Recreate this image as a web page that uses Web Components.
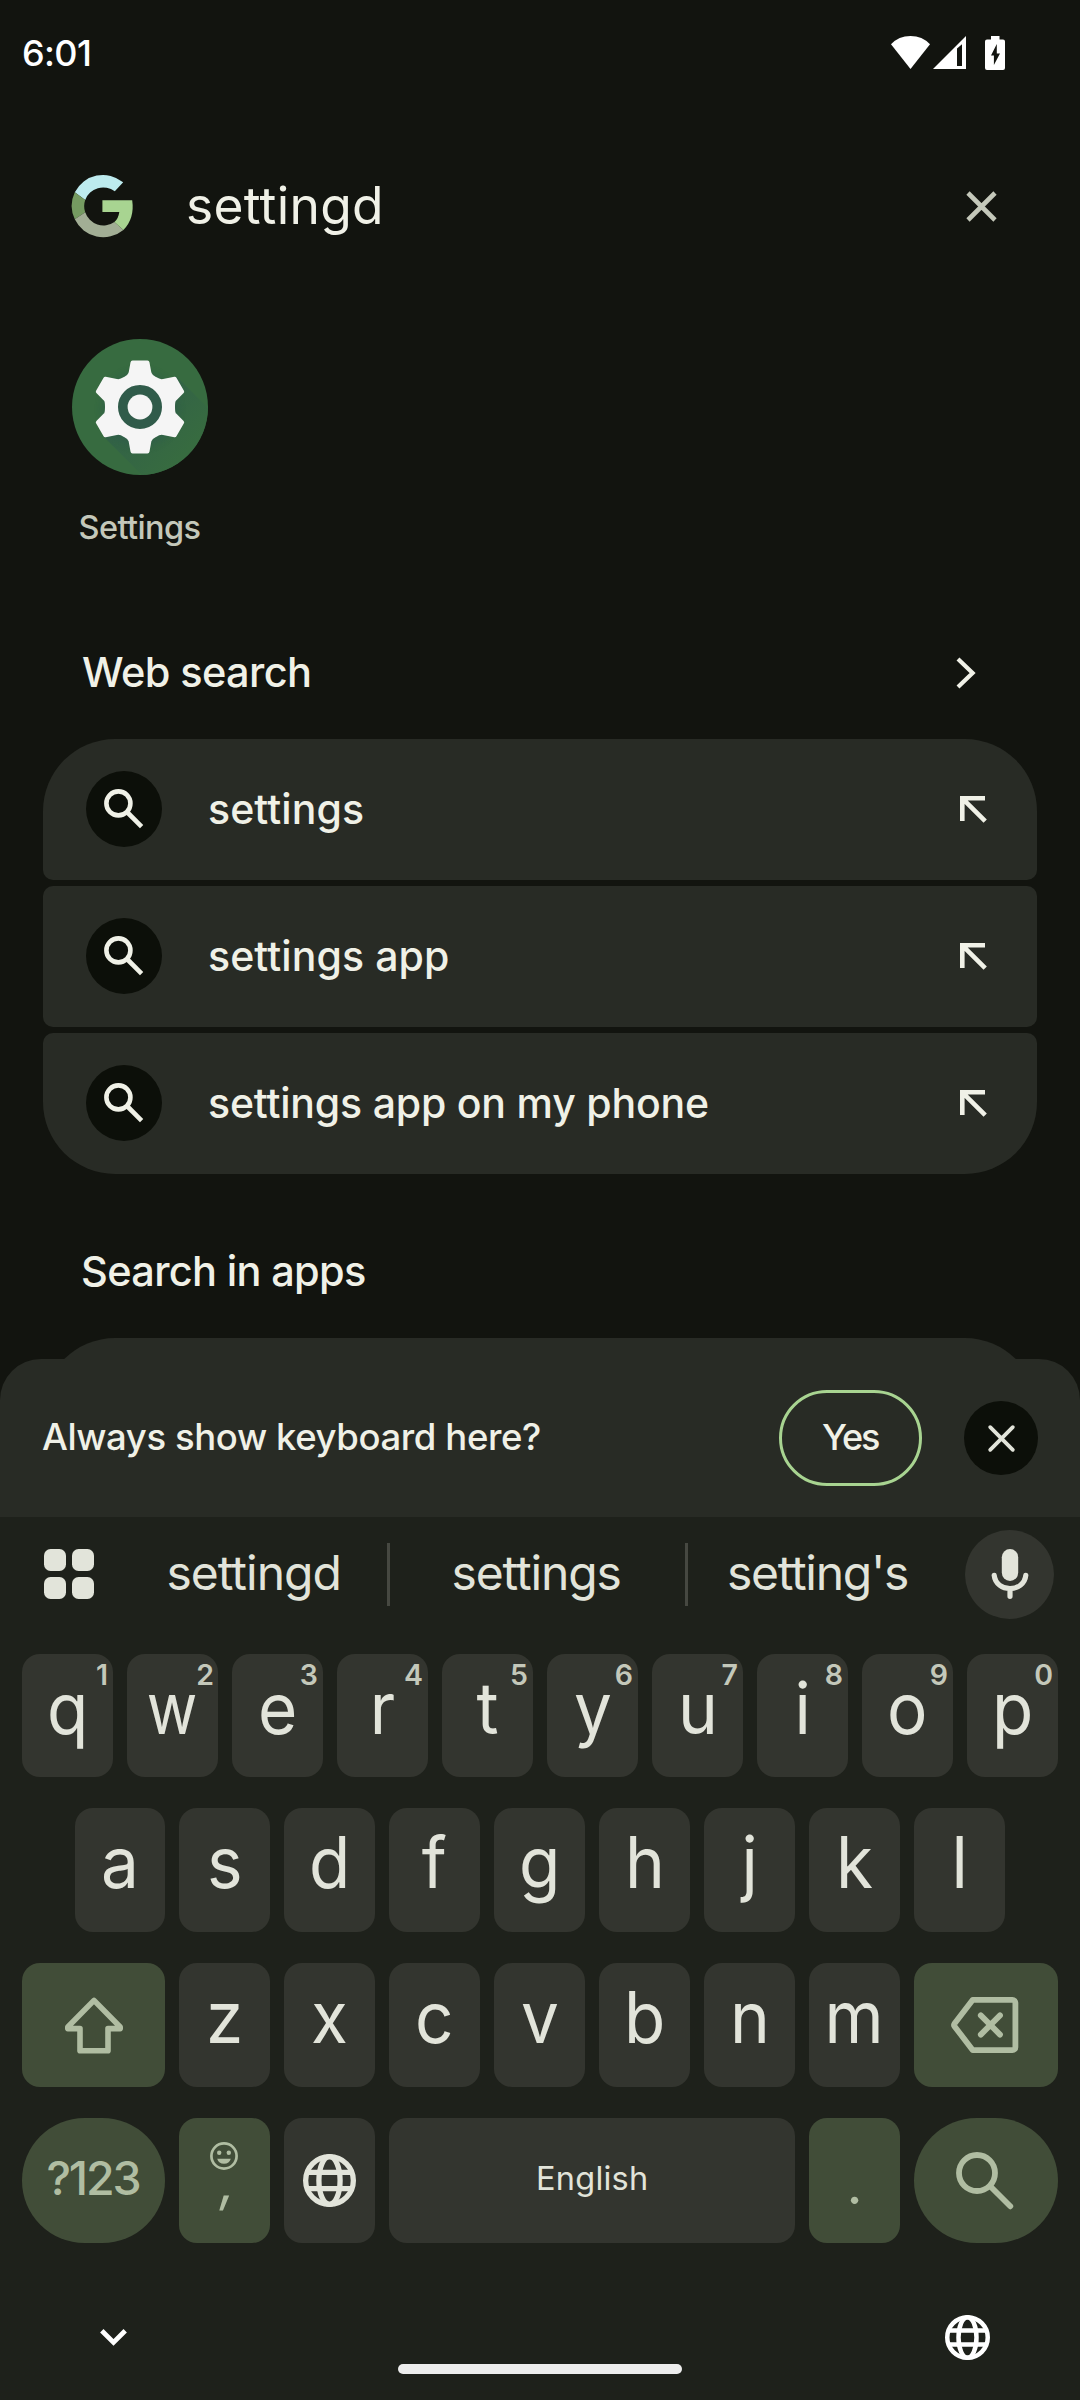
<!DOCTYPE html>
<html lang="en">
<head>
<meta charset="utf-8">
<title>Search</title>
<style>
html,body{margin:0;padding:0;background:#12140f}
body{width:1080px;height:2400px;overflow:hidden;font-family:Inter,Roboto,"Liberation Sans",sans-serif;color:#f0f1e7}
</style>
</head>
<body>
<phone-screen></phone-screen>
<script>
const define=(name,html,setup)=>{
  const t=document.createElement('template');t.innerHTML=html;
  customElements.define(name,class extends HTMLElement{
    connectedCallback(){
      if(this.shadowRoot)return;
      this.attachShadow({mode:'open'}).appendChild(t.content.cloneNode(true));
      if(setup)setup(this,this.shadowRoot);
    }
  });
};

/* Text whose box is exactly its ink width: attributes w (width), size, weight. */
const ctx=document.createElement('canvas').getContext('2d');
define('fit-text',`<style>:host{display:block;white-space:pre;flex:none;line-height:1}span{display:block}</style><span><slot></slot></span>`,(el,root)=>{
  const s=+el.getAttribute('size'),wt=el.getAttribute('weight')||400,w=+el.getAttribute('w');
  const txt=el.textContent;
  ctx.font=`${wt} ${s}px Inter, Roboto, sans-serif`;
  const m=ctx.measureText(txt),l=-m.actualBoundingBoxLeft,r=m.actualBoundingBoxRight;
  const ls=(w-(r-l))/(txt.length-1);
  const sp=root.querySelector('span').style;
  el.style.fontSize=s+'px';el.style.fontWeight=wt;el.style.width=w+'px';
  sp.letterSpacing=ls+'px';sp.marginLeft=-l+'px';sp.width='max-content';
});

const GLOBE=`<circle cx="12" cy="12" r="9"/><ellipse cx="12" cy="12" rx="4" ry="9"/><path d="M3.7 8.9h16.6M3.7 15.1h16.6"/>`;
const ICONS={
  wifi:[39,33,'<path fill="currentColor" d="M0 8.3Q7.6 0 19.5 0T39 8.3L19.5 33z"/>'],
  signal:[33,33,'<path fill="currentColor" fill-rule="evenodd" d="M0 33L33 0V33zM24 12.5V30h5V8.3z"/>'],
  battery:[20,34,'<path fill="currentColor" fill-rule="evenodd" d="M6 0h8.5v3.5H18a2 2 0 0 1 2 2V32a2 2 0 0 1-2 2H2a2 2 0 0 1-2-2V5.500a2 2 0 0 1 2-2h4zM11.800 8L6 19.600h2.900V29L15 17.400h-3.200z"/>'],
  google:[62,64,'<path fill="#bdebee" d="M52.2 8.3A31.5 31.5 0 0 0 3.8 18.3L14.2 25.9A19.2 19.2 0 0 1 43.8 17.3z"/><path fill="#759b61" d="M3.8 18.3a31.5 31.5 0 0 0 0 27L14.2 38.3a19.2 19.2 0 0 1 0-12.4z"/><path fill="#a2ae95" d="M3.8 45.3A31.6 31.6 0 0 0 52.4 56L43.4 48A19.2 19.2 0 0 1 14.2 38.3z"/><path fill="#a8d491" d="M31.4 26.3H61.2Q63.8 44.5 52.4 56L43.4 48Q47.4 44.8 48.3 38H31.4z"/>'],
  clear:[31,31,'<path fill="none" stroke="currentColor" stroke-width="4.6" d="M2 2L29 29M29 2L2 29"/>'],
  next:[20,32,'<path fill="none" stroke="currentColor" stroke-width="4.2" d="M2 2L16.6 16L2 30"/>'],
  insert:[27,27,'<path fill="none" stroke="currentColor" stroke-width="4.6" d="M25 2.3H2.3V25M2.8 2.8L25.2 25.2"/>'],
  find:[40,40,'<g fill="none" stroke="currentColor" stroke-width="4.6"><circle cx="14.4" cy="14.4" r="12"/><path d="M23 23L37.6 37.6"/></g>'],
  dismiss:[27,27,'<path fill="none" stroke="currentColor" stroke-width="3.8" stroke-linecap="round" d="M2.2 2.2L24.8 24.8M24.8 2.2L2.2 24.8"/>'],
  apps:[50,50,'<g fill="currentColor"><rect width="22" height="22" rx="6.5"/><rect x="28" width="22" height="22" rx="6.5"/><rect y="28" width="22" height="22" rx="6.5"/><rect x="28" y="28" width="22" height="22" rx="6.5"/></g>'],
  mic:[38,50,'<rect x="10.8" width="16.4" height="32" rx="8.2" fill="currentColor"/><path fill="none" stroke="currentColor" stroke-width="5.2" stroke-linecap="round" d="M3.2 26.3C5 44 33 44 34.8 26.3M19 40V47.3"/>'],
  shift:[60,58,'<path fill="none" stroke="currentColor" stroke-width="5.6" stroke-linejoin="round" d="M30 4.4L3.8 31V32.6H16V54.7H44V32.6H56.2V31z"/>'],
  back:[68,56,'<g fill="none" stroke="currentColor" stroke-width="5.8" stroke-linejoin="round" stroke-linecap="round"><path d="M21.8 2.8H61.4A3 3 0 0 1 64.4 5.8V50.2A3 3 0 0 1 61.4 53.2H21.8L3.4 29.2Q2.6 28 3.4 26.8z"/><path d="M29.8 18.4L49 37.6M49 18.4L29.8 37.6"/></g>'],
  search:[58,58,'<g fill="none" stroke="currentColor" stroke-width="5.8" stroke-linecap="round"><circle cx="21" cy="21" r="18"/><path d="M34.5 34.5L54.3 54.3"/></g>'],
  smile:[28,28,'<circle cx="14" cy="14" r="12.6" fill="none" stroke="currentColor" stroke-width="2.7"/><g fill="currentColor"><circle cx="9.2" cy="10.7" r="2.2"/><circle cx="18.8" cy="10.7" r="2.2"/><path d="M7.2 16.8H20.8Q19.3 21.8 14 21.8T7.2 16.8z"/></g>'],
  down:[27,17,'<path fill="none" stroke="currentColor" stroke-width="4.8" d="M1.8 1.8L13.5 13.4L25.2 1.8"/>'],
  globekey:[53,53,`<g transform="scale(2.65) translate(-2 -2)" fill="none" stroke="currentColor" stroke-width="2">${GLOBE}</g>`],
  globe:[45,45,`<g transform="scale(2.25) translate(-2 -2)" fill="none" stroke="currentColor" stroke-width="2">${GLOBE}</g>`],
  settings:[136,136,`<defs><linearGradient id="s" x1="30" y1="30" x2="118" y2="118" gradientUnits="userSpaceOnUse"><stop offset=".3" stop-color="#2f5c4b"/><stop offset=".95" stop-color="#376b40"/></linearGradient><clipPath id="c"><circle cx="68" cy="68" r="68"/></clipPath><filter id="b" x="-30%" y="-30%" width="160%" height="160%"><feGaussianBlur stdDeviation="3"/></filter></defs>
   <circle cx="68" cy="68" r="68" fill="#376b40"/>
   <g clip-path="url(#c)"><path d="M32 98L104 37L164 97L92 158z" fill="url(#s)" opacity=".75"/><circle cx="68" cy="70" r="39" fill="#2f5c4b" opacity=".45" filter="url(#b)"/></g><circle cx="68" cy="68" r="26" fill="#305b4a"/>
   <path fill="#f5f5f5" stroke="#f5f5f5" stroke-width="4" stroke-linejoin="round" fill-rule="evenodd" d="M60.500 23.500H75.500L77.500 34.500Q78.500 37.500 83 39.800Q88 43 91.500 42L102.700 39.700L110.200 52.700L102.300 60.600Q101 62 101 68T102.300 75.400L110.200 83.300L102.700 96.300L91.500 94Q88 93 83 96.200Q78.500 98.500 77.500 101.500L75.500 112.500H60.500L58.500 101.500Q57.500 98.500 53 96.200Q48 93 44.500 94L33.300 96.300L25.800 83.300L33.700 75.400Q35 74 35 68T33.700 60.600L25.800 52.700L33.300 39.700L44.500 42Q48 43 53 39.800Q57.500 37.500 58.500 34.500zM68 44a24 24 0 1 0 0 48a24 24 0 1 0 0-48z"/>
   <circle cx="68" cy="68" r="12.400" fill="#f5f5f5"/>`]
};
define('ui-icon',`<style>:host{display:block;flex:none;line-height:0}svg{display:block;overflow:visible}</style>`,(el,root)=>{
  const [w,h,b]=ICONS[el.getAttribute('name')];
  const d=document.createElement('div');
  d.innerHTML=`<svg width="${w}" height="${h}" viewBox="0 0 ${w} ${h}">${b}</svg>`;
  root.appendChild(d);
});

define('status-bar',`<style>:host{display:flex;height:105px;align-items:center;padding:0 75px 0 23px;box-sizing:border-box;color:#fff}
.icons{margin-left:auto;display:flex;align-items:center}.sig{margin:0 19px 0 3px}</style>
<fit-text w="67" size="36" weight="550">6:01</fit-text>
<div class="icons"><ui-icon name="wifi"></ui-icon><ui-icon class="sig" name="signal"></ui-icon><ui-icon name="battery"></ui-icon></div>`);

define('search-field',`<style>:host{display:flex;height:202px;align-items:center;padding:0 83px 0 71px;box-sizing:border-box}
fit-text{margin-left:55px}.x{margin-left:auto;color:#c4c8ba}</style>
<ui-icon name="google"></ui-icon><fit-text w="192" size="51.5">settingd</fit-text><ui-icon class="x" name="clear"></ui-icon>`);

define('app-result',`<style>:host{display:flex;flex-direction:column;align-items:center;width:136px;margin:32px 0 0 72px;color:#c4c8ba}
div{height:40px;margin-top:33px;display:flex;align-items:center}</style>
<ui-icon name="settings"></ui-icon><div><slot></slot></div>`);

define('section-title',`<style>:host{display:flex;height:133px;align-items:center;justify-content:space-between;padding:0 104px 0 83px}
::slotted(fit-text){padding-top:1px}</style><slot></slot><slot name="action"></slot>`);

define('search-row',`<style>:host{display:flex;align-items:center;height:141px;box-sizing:border-box;padding:0 50px 0 43px;background:#282b25;border-radius:10px}
:host([first]){border-radius:72px 72px 10px 10px}:host([last]){border-radius:10px 10px 72px 72px}
.dot{width:76px;height:76px;border-radius:50%;background:#0c0f09;display:flex;align-items:center;justify-content:center;margin:0 47px 2px 0}
.a{margin-left:auto}</style>
<div class="dot"><ui-icon name="find"></ui-icon></div><slot></slot><ui-icon class="a" name="insert"></ui-icon>`);

define('search-results',`<style>:host{display:block;height:1359px;overflow:hidden}
.list{display:flex;flex-direction:column;gap:6px;margin:0 43px}.first{margin-top:58px}.second{margin-top:31px}
.card{height:160px;margin:0 43px;border-radius:72px 72px 10px 10px;background:#282b25}</style>
<status-bar></status-bar><search-field></search-field>
<app-result><fit-text w="121" size="32.5" weight="450">Settings</fit-text></app-result>
<section-title class="first"><fit-text w="226" size="41.5" weight="500">Web search</fit-text><ui-icon slot="action" name="next"></ui-icon></section-title>
<div class="list">
<search-row first><fit-text w="154" size="41" weight="500">settings</fit-text></search-row>
<search-row><fit-text w="239" size="41" weight="500">settings app</fit-text></search-row>
<search-row last><fit-text w="499" size="41" weight="500">settings app on my phone</fit-text></search-row>
</div>
<section-title class="second"><fit-text w="282" size="41.5" weight="500">Search in apps</fit-text></section-title>
<div class="card"></div>`);

define('keyboard-prompt',`<style>:host{display:flex;align-items:center;height:158px;box-sizing:border-box;padding:0 42px 0 42px;background:#282b25;border-radius:41px 41px 0 0}
fit-text{padding-bottom:1px}
.yes{margin-left:auto;width:143px;height:96px;box-sizing:border-box;border:3px solid #a8d491;border-radius:48px;display:flex;align-items:center;justify-content:center}
.yes fit-text{padding-bottom:3px}
.x{width:74px;height:74px;border-radius:50%;background:#0c0f09;color:#e2e4da;margin-left:42px;display:flex;align-items:center;justify-content:center}</style>
<fit-text w="498" size="36.5" weight="500">Always show keyboard here?</fit-text>
<div class="yes"><fit-text w="57" size="36" weight="500">Yes</fit-text></div>
<div class="x"><ui-icon name="dismiss"></ui-icon></div>`);

define('suggestion-strip',`<style>:host{display:flex;align-items:center;height:115px;padding:0 26px 22px 44px;color:#e2e4da}
fit-text{padding-bottom:4px}
.s{display:flex;justify-content:center;width:267px}.m{width:293px;padding-right:2px}.e{width:260px}
.grid{width:76px;padding-bottom:2px}i{width:3px;height:63px;background:#464841}
.mic{margin-left:auto;width:89px;height:89px;border-radius:50%;background:#33352f;display:flex;align-items:center;justify-content:center}.mic ui-icon{margin-top:-2px}</style>
<div class="grid"><ui-icon name="apps"></ui-icon></div>
<div class="s"><fit-text w="170" size="48">settingd</fit-text></div><i></i>
<div class="s m"><fit-text w="166" size="48">settings</fit-text></div><i></i>
<div class="s e"><fit-text w="178" size="48">setting's</fit-text></div>
<div class="mic"><ui-icon name="mic"></ui-icon></div>`);

/* A key: letter in the slot, optional long-press hint, flags for colour and shape. */
define('kb-key',`<style>:host{position:relative;display:flex;flex-direction:column;align-items:center;justify-content:center;width:91px;height:100%;box-sizing:border-box;border-radius:18px;background:#33352f;color:#e2e4da;font-size:70px;line-height:1}
:host([letter]){padding-bottom:15px;font-size:71px;font-weight:430}
:host([letter]) .face{transform:scaleX(.95)}
:host([accent]){background:#414d38;color:#b0bda2}
:host([wide]){width:143px}:host([wider]){width:144px}:host([round]){border-radius:63px}
:host([space]){width:406px;padding-bottom:2px}
.hint{position:absolute;top:6px;right:5px;font-size:28.5px;line-height:29px;font-weight:620;color:#c4c8ba}
:host([glyph=w]) .face{transform:scaleX(.87)}
:host([glyph=w]) .hint{right:4px}</style><div class="face"><slot></slot></div><span class="hint"></span>`,(el,root)=>{
  const h=root.querySelector('.hint'),v=el.getAttribute('hint');
  if(v)h.textContent=v;else h.remove();
});
const keys=(s,hints)=>[...s].map((c,i)=>`<kb-key letter glyph="${c}"${hints?` hint="${hints[i]}"`:''}>${c}</kb-key>`).join('');

define('soft-keyboard',`<style>:host{display:flex;flex-direction:column;height:883px;background:#1e211b}
.row{display:flex;justify-content:center;gap:14px;height:124px;margin-bottom:31px;flex:none}
.row.top{height:123px}.row.bottom{height:125px;margin-bottom:0}
.row.mid{justify-content:flex-start;padding-left:75px}.mid kb-key:first-child{width:90px}
.pad{display:flex;flex-direction:column;align-items:center;height:125px}
.pad ui-icon{margin:24px 2px 0 0}.comma{font-size:54px;line-height:50px;margin:-13px 0 0 7px;transform:skewX(-8deg)}
.dot{display:block;font-size:56px;line-height:50px;margin-top:7px}
.up{padding-bottom:5px}.l{margin-right:3px}
.nav{display:flex;height:157px;padding:0 90px 0 100px;justify-content:space-between;box-sizing:border-box;color:#fff}
.down{margin-top:86px}.bar{width:284px;height:10px;border-radius:5px;background:#ededed;margin:121px 0 0 7px}.globe{margin-top:72px}</style>
<suggestion-strip></suggestion-strip>
<div class="row top">${keys('qwertyuiop','1234567890')}</div>
<div class="row mid">${keys('asdfghjkl')}</div>
<div class="row"><kb-key accent wide><ui-icon name="shift"></ui-icon></kb-key>${keys('zxcvbnm')}<kb-key accent wider><ui-icon class="l" name="back"></ui-icon></kb-key></div>
<div class="row bottom"><kb-key accent wide round><fit-text class="up" w="92" size="46.5" weight="500">?123</fit-text></kb-key>
<kb-key accent><div class="pad"><ui-icon name="smile"></ui-icon><span class="comma">,</span></div></kb-key>
<kb-key><ui-icon name="globekey"></ui-icon></kb-key>
<kb-key space><fit-text w="108" size="32.5">English</fit-text></kb-key>
<kb-key accent><span class="dot">.</span></kb-key>
<kb-key accent wider round><ui-icon class="l" name="search"></ui-icon></kb-key></div>
<div class="nav"><ui-icon class="down" name="down"></ui-icon><div class="bar"></div><ui-icon class="globe" name="globe"></ui-icon></div>`);

define('phone-screen',`<style>:host{display:flex;flex-direction:column;width:1080px;height:2400px;background:#12140f;overflow:hidden}</style>
<search-results></search-results><keyboard-prompt></keyboard-prompt><soft-keyboard></soft-keyboard>`);
</script>
</body>
</html>
